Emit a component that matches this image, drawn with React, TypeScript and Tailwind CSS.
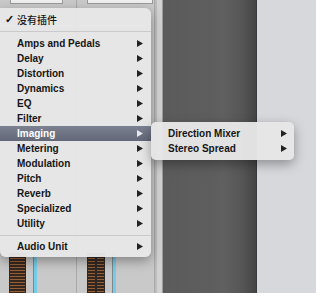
import React from "react";

const categories = [
  "Amps and Pedals",
  "Delay",
  "Distortion",
  "Dynamics",
  "EQ",
  "Filter",
  "Imaging",
  "Metering",
  "Modulation",
  "Pitch",
  "Reverb",
  "Specialized",
  "Utility",
];

function Arrow({ light }: { light?: boolean }) {
  return (
    <svg width="6" height="7" viewBox="0 0 6 7" className="shrink-0">
      <path d="M0 0 L6 3.5 L0 7 Z" fill={light ? "#e8eaee" : "#222"} />
    </svg>
  );
}

function Row({ label, active }: { label: string; active?: boolean }) {
  return (
    <div
      className={`flex h-[15px] items-center justify-between pl-[17px] pr-[8px] text-[10px] font-bold leading-[15px] ${
        active
          ? "bg-gradient-to-b from-[#7b8191] to-[#626878] text-white"
          : "text-[#151515]"
      }`}
    >
      <span>{label}</span>
      <Arrow light={active} />
    </div>
  );
}

function Meter({ w }: { w: string }) {
  return (
    <div
      className={`${w} h-full border-x border-[#2a2a2a] bg-[repeating-linear-gradient(to_bottom,#35271e_0px,#35271e_2px,#93603a_2px,#93603a_3px)]`}
    />
  );
}

function Cyan() {
  return <div className="ml-[7px] h-full w-[4px] border-l border-[#7a8a90] bg-[#74cde8]" />;
}

function Strip({ first }: { first?: boolean }) {
  return (
    <div
      className={`flex h-full flex-col border-r border-[#a9a9a9] bg-[#c9c9c9] ${
        first ? "w-[77px]" : "w-[78px]"
      }`}
    >
      <div className={`h-[4px] border border-t-0 border-[#9a9a9a] bg-[#efefef] ${first ? "ml-[10px] w-[53px]" : "ml-[10px] w-[66px]"}`} />
      <div className="flex-1" />
      {first ? (
        <div className="flex h-[40px] pl-[9px]">
          <Meter w="w-[17px]" />
          <Cyan />
        </div>
      ) : (
        <div className="flex h-[40px] pl-[10px]">
          <Meter w="w-[9px]" />
          <Meter w="w-[9px]" />
          <Cyan />
        </div>
      )}
    </div>
  );
}

export default function App() {
  return (
    <div className="relative flex h-[293px] w-[316px] overflow-hidden font-['Liberation_Sans',Arial,sans-serif]">
      {/* Mixer strips */}
      <div className="flex h-full w-[163px]">
        <Strip first />
        <Strip />
        <div className="flex h-full w-[8px]">
          <div className="w-[2px] bg-[#bdbdbd]" />
          <div className="w-[5px] bg-[#d2d2d2]" />
          <div className="w-[1px] bg-[#9c9c9c]" />
        </div>
      </div>

      {/* Dark panel */}
      <div className="h-full w-[94px] border-r border-[#3a3a3a] bg-[linear-gradient(to_right,#5b5b5b_0%,#5e5e5e_55%,#606060_65%,#565656_85%,#444444_100%)]" />

      {/* Right panel */}
      <div className="h-full flex-1 bg-[#d7d8dc]" />

      {/* Main menu */}
      <div className="absolute left-0 top-[8px] w-[151px] rounded-b-[6px] rounded-tr-[6px] bg-[#e6e6e6]/[0.97] pb-[3px] pt-[4px] shadow-[0_4px_12px_rgba(0,0,0,0.35)]">
        <div className="flex h-[15px] items-center text-[10px] leading-[15px] text-[#151515]">
          <span className="w-[17px] pl-[5px] text-[11px] font-bold">✓</span>
          <span className="font-['Noto_Sans_CJK_SC',sans-serif] font-medium">没有插件</span>
        </div>
        <div className="flex h-[9px] items-center">
          <div className="h-[1px] w-full bg-[#cacaca]" />
        </div>
        {categories.map((c) => (
          <Row key={c} label={c} active={c === "Imaging"} />
        ))}
        <div className="flex h-[8px] items-center">
          <div className="h-[1px] w-full bg-[#cacaca]" />
        </div>
        <Row label="Audio Unit" />
      </div>

      {/* Submenu */}
      <div className="absolute left-[151px] top-[122px] w-[143px] rounded-[5px] bg-[#e6e6e6]/[0.97] py-[4px] shadow-[0_4px_12px_rgba(0,0,0,0.35)]">
        <div className="[&>div]:pr-[7px]">
          <Row label="Direction Mixer" />
          <Row label="Stereo Spread" />
        </div>
      </div>
    </div>
  );
}
